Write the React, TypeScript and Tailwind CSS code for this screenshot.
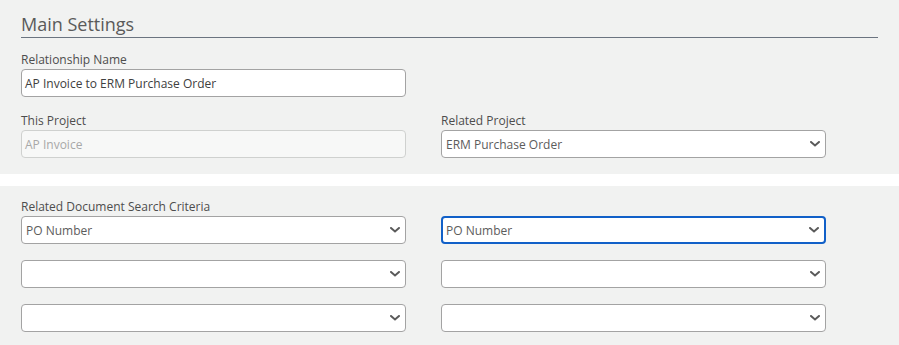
import React from 'react';

const font = { fontFamily: '"Open Sans", "Liberation Sans", sans-serif' };

const Chevron = () => (
  <svg width="10" height="6" viewBox="0 0 10 6" className="absolute right-[5px] top-1/2 -translate-y-1/2">
    <path d="M1 1l4 3.5L9 1" fill="none" stroke="#5a5a5a" strokeWidth="2" strokeLinecap="round" />
  </svg>
);

interface SelectBoxProps {
  value?: string;
  focused?: boolean;
}

const SelectBox: React.FC<SelectBoxProps> = ({ value, focused }) => (
  <div
    className={
      focused
        ? 'relative h-[28px] bg-white rounded-[4px] border-2 border-[#1160c8] pl-[3px] flex items-center'
        : 'relative h-[28px] bg-white rounded-[4px] border border-[#a3a3a3] pl-[4px] flex items-center'
    }
  >
    <span className="text-[12px] text-[#5c5c5c] leading-4 translate-y-px">{value}</span>
    <Chevron />
  </div>
);

const Label: React.FC<{ children: React.ReactNode }> = ({ children }) => (
  <div className="text-[12px] leading-4 text-[#4d4d4d] mb-px">{children}</div>
);

export default function App() {
  return (
    <div style={font} className="w-[899px] h-[345px] bg-[#f1f2f1] overflow-hidden">
      {/* Main settings */}
      <div className="px-[21px] pb-[16px]">
        <div className="pt-[12px] text-[18px] leading-[25px] text-[#5a5a5a] border-b border-[#6b7480] w-[857px]">
          Main Settings
        </div>

        <div className="mt-[14px] w-[385px]">
          <Label>Relationship Name</Label>
          <div className="h-[28px] bg-white rounded-[4px] border border-[#a3a3a3] pl-[3px] flex items-center">
            <span className="text-[12px] text-[#404040] leading-4 translate-y-px">AP Invoice to ERM Purchase Order</span>
          </div>
        </div>

        <div className="mt-[16px] grid grid-cols-[385px_385px] gap-x-[35px]">
          <div>
            <Label>This Project</Label>
            <div className="h-[28px] bg-[#f7f8f7] rounded-[4px] border border-[#cfd1cf] pl-[3px] flex items-center">
              <span className="text-[12px] text-[#a8a8a8] leading-4 translate-y-px">AP Invoice</span>
            </div>
          </div>
          <div>
            <Label>Related Project</Label>
            <SelectBox value="ERM Purchase Order" />
          </div>
        </div>
      </div>

      <div className="h-[12px] bg-white" />

      {/* Search criteria */}
      <div className="px-[21px] pt-[13px]">
        <Label>Related Document Search Criteria</Label>
        <div className="grid grid-cols-[385px_385px] gap-x-[35px] gap-y-[16px] mt-px">
          <SelectBox value="PO Number" />
          <SelectBox value="PO Number" focused />
          <SelectBox />
          <SelectBox />
          <SelectBox />
          <SelectBox />
        </div>
      </div>
    </div>
  );
}
